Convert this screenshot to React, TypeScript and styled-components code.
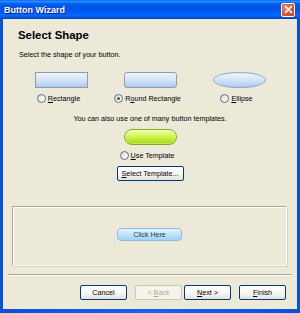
import styled, { createGlobalStyle } from 'styled-components';

const FONT = `"Liberation Sans", Arial, sans-serif`;

const GlobalStyle = createGlobalStyle`
  html, body {
    margin: 0;
    padding: 0;
  }
  body {
    width: 300px;
    height: 313px;
    overflow: hidden;
    background: #ece9d8;
    font-family: ${FONT};
  }
`;

type ShapeKind = 'rect' | 'round' | 'ellipse';

const shapes: { kind: ShapeKind; key: string; rest: string; pre?: string; checked?: boolean }[] = [
  { kind: 'rect', key: 'R', rest: 'ectangle' },
  { kind: 'round', pre: 'R', key: 'o', rest: 'und Rectangle', checked: true },
  { kind: 'ellipse', key: 'E', rest: 'llipse' },
];

export default function App() {
  return (
    <>
      <GlobalStyle />
      <Window>
        <TitleBar>
          <TitleText>Button Wizard</TitleText>
          <CloseButton aria-label="Close">
            <svg width="9" height="9" viewBox="0 0 9 9">
              <path d="M1.5 1.5 L7.5 7.5 M7.5 1.5 L1.5 7.5" stroke="#fff" strokeWidth="1.7" strokeLinecap="round" />
            </svg>
          </CloseButton>
        </TitleBar>

        <Client>
          <Header>
            <Heading>Select Shape</Heading>
            <Subtitle>Select the shape of your button.</Subtitle>
          </Header>

          <ShapeGrid>
            {shapes.map((s) => (
              <ShapeOption key={s.kind}>
                <ShapePreview $kind={s.kind} />
                <RadioRow>
                  <Radio $checked={s.checked} />
                  <RadioLabel>
                    {s.pre}
                    <u>{s.key}</u>
                    {s.rest}
                  </RadioLabel>
                </RadioRow>
              </ShapeOption>
            ))}
          </ShapeGrid>

          <TemplateSection>
            <Note>You can also use one of many button templates.</Note>
            <TemplatePill />
            <RadioRow>
              <Radio />
              <RadioLabel>
                <u>U</u>se Template
              </RadioLabel>
            </RadioRow>
            <PushButton $width={67}>
              <u>S</u>elect Template...
            </PushButton>
          </TemplateSection>

          <PreviewPanel>
            <SampleButton>Click Here</SampleButton>
          </PreviewPanel>

          <Separator />

          <Footer>
            <PushButton>Cancel</PushButton>
            <NavGroup>
              <PushButton disabled>
                &lt; <u>B</u>ack
              </PushButton>
              <PushButton>
                <u>N</u>ext &gt;
              </PushButton>
            </NavGroup>
            <PushButton>
              <u>F</u>inish
            </PushButton>
          </Footer>
        </Client>
      </Window>
    </>
  );
}

const Window = styled.div`
  width: 300px;
  height: 313px;
  box-sizing: border-box;
  display: flex;
  flex-direction: column;
  background: linear-gradient(90deg, #0a4fd8 0%, #1a62ea 50%, #0a4fd8 100%);
  padding: 0 3px 4px 3px;
`;

const TitleBar = styled.div`
  flex: none;
  height: 19px;
  margin: 0 -3px;
  padding: 0 4px 0 4px;
  display: flex;
  align-items: center;
  justify-content: space-between;
  background: linear-gradient(
    180deg,
    #0058ee 0%,
    #3593ff 6%,
    #127dff 12%,
    #0262ee 20%,
    #0057e5 30%,
    #0055eb 56%,
    #005bf5 66%,
    #026afe 76%,
    #0062ef 86%,
    #0052d6 94%,
    #0040ab 100%
  );
`;

const TitleText = styled.span`
  color: #fff;
  font-family: ${FONT};
  font-weight: bold;
  font-size: 9px;
  text-shadow: 1px 1px 0 #0f1089;
`;

const CloseButton = styled.div`
  width: 12px;
  height: 12px;
  margin-right: 1px;
  border: 1px solid #fff;
  border-radius: 2px;
  display: flex;
  align-items: center;
  justify-content: center;
  background: radial-gradient(circle at 30% 30%, #f08c6c 0%, #e05a36 45%, #c1401e 100%);
`;

const Client = styled.div`
  flex: 1;
  display: flex;
  flex-direction: column;
  background: #ece9d8;
  color: #000;
  font-family: ${FONT};
  font-size: 7.2px;
`;

const Header = styled.div`
  padding: 10px 0 0 15px;
  display: flex;
  flex-direction: column;
  gap: 8px;
`;

const Heading = styled.div`
  font-size: 11.4px;
  font-weight: bold;
  line-height: 13px;
`;

const Subtitle = styled.div`
  line-height: 9px;
  padding-left: 1px;
`;

const ShapeGrid = styled.div`
  margin-top: 13px;
  padding-left: 14px;
  display: grid;
  grid-template-columns: repeat(3, 89px);
`;

const ShapeOption = styled.div`
  display: flex;
  flex-direction: column;
  align-items: center;
  gap: 6px;
`;

const ShapePreview = styled.div<{ $kind: ShapeKind }>`
  width: 53px;
  height: 16px;
  box-sizing: border-box;
  border: 1px solid ${(p) => (p.$kind === 'ellipse' ? '#93a8c2' : '#8b9db5')};
  border-radius: ${(p) => (p.$kind === 'rect' ? '0' : p.$kind === 'round' ? '3px' : '50%')};
  background: linear-gradient(180deg, #eef3fb 0%, #d9e6f7 45%, #b0caef 100%);
`;

const RadioRow = styled.div`
  display: flex;
  align-items: center;
  gap: 2px;
  height: 9px;
  padding-right: 6px;
`;

const Radio = styled.span<{ $checked?: boolean }>`
  position: relative;
  width: 9px;
  height: 9px;
  box-sizing: border-box;
  border-radius: 50%;
  border: 1px solid #5a6f8e;
  background: linear-gradient(135deg, #d8d8d0 0%, #f4f4f0 60%, #ffffff 100%);

  &::after {
    content: '';
    display: ${(p) => (p.$checked ? 'block' : 'none')};
    position: absolute;
    inset: 2px;
    border-radius: 50%;
    background: radial-gradient(circle at 35% 35%, #5f7a4a 0%, #34502a 70%);
  }
`;

const RadioLabel = styled.span`
  line-height: 9px;
  white-space: nowrap;

  u {
    text-decoration: underline;
    text-underline-offset: 1px;
  }
`;

const TemplateSection = styled.div`
  margin-top: 11px;
  display: flex;
  flex-direction: column;
  align-items: center;
  gap: 6px;
`;

const Note = styled.div`
  line-height: 9px;
`;

const TemplatePill = styled.div`
  width: 53px;
  height: 16px;
  box-sizing: border-box;
  border: 1px solid #7fae1c;
  border-radius: 8px;
  background: linear-gradient(180deg, #f2ffb8 0%, #d6f75c 40%, #b8e62a 75%, #a6d61c 100%);
  box-shadow: inset 0 0 0 1px rgba(255, 255, 255, 0.35);
`;

const PushButton = styled.button<{ $width?: number }>`
  width: ${(p) => p.$width ?? 47}px;
  height: 15px;
  padding: 0;
  box-sizing: border-box;
  border: 1px solid #003c74;
  border-radius: 2px;
  background: linear-gradient(180deg, #ffffff 0%, #f6f5f1 60%, #e3e1d6 100%);
  font-family: ${FONT};
  font-size: 7.2px;
  line-height: 13px;
  color: #000;
  white-space: nowrap;

  &:disabled {
    border-color: #c9c7ba;
    background: #f5f4ea;
    color: #aca899;
  }

  u {
    text-decoration: underline;
  }
`;

const PreviewPanel = styled.div`
  margin: 25px 10px 0 9px;
  height: 60px;
  box-sizing: border-box;
  border-top: 1px solid #aca899;
  border-left: 1px solid #aca899;
  border-right: 1px solid #fff;
  border-bottom: 1px solid #fff;
  box-shadow: inset 1px 1px 0 #fff, 1px 1px 0 #d6d3c4;
  display: flex;
  align-items: center;
  justify-content: center;
`;

const SampleButton = styled.div`
  width: 65px;
  height: 13px;
  box-sizing: border-box;
  border: 1px solid #8fbbe0;
  border-radius: 4px;
  background: linear-gradient(180deg, #e4f3ff 0%, #c4e4fc 45%, #a2d2f6 100%);
  color: #2b3a4a;
  font-size: 7px;
  line-height: 11px;
  text-align: center;
  margin-top: -3px;
`;

const Separator = styled.div`
  margin: 8px 5px 0 5px;
  height: 1px;
  background: #aca899;
  border-bottom: 1px solid #fff;
`;

const Footer = styled.div`
  margin-top: 9px;
  padding-right: 11px;
  display: flex;
  justify-content: flex-end;
  gap: 8px;
`;

const NavGroup = styled.div`
  display: flex;
  gap: 2px;
`;
